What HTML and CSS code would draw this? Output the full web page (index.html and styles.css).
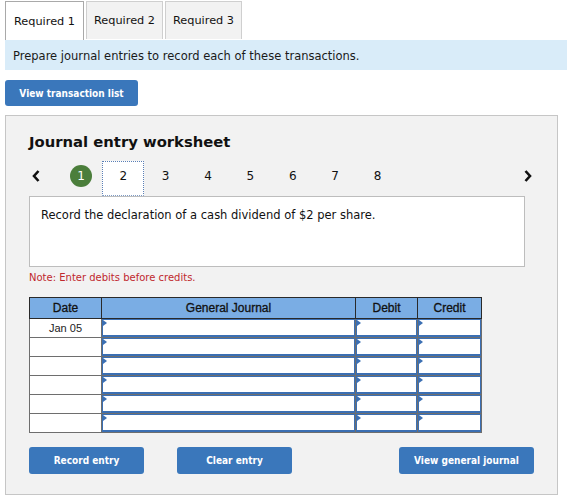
FILE: index.html
```html
<!DOCTYPE html>
<html>
<head>
<meta charset="utf-8">
<link rel="stylesheet" href="styles.css">
</head>
<body>
<div class="tabs">
  <div class="tab active">Required 1</div>
  <div class="tab">Required 2</div>
  <div class="tab">Required 3</div>
</div>
<div class="banner">Prepare journal entries to record each of these transactions.</div>
<button class="btn btn-list">View transaction list</button>
<div class="panel">
  <div class="title">Journal entry worksheet</div>
  <div class="nav">
    <div class="arrow"><svg width="10" height="14" viewBox="0 0 10 14"><path d="M7.5 2 L3 7 L7.5 12" fill="none" stroke="#111" stroke-width="2.6"/></svg></div>
    <div class="step done"><span class="circle">1</span></div>
    <div class="step current">2</div>
    <div class="step">3</div>
    <div class="step">4</div>
    <div class="step">5</div>
    <div class="step">6</div>
    <div class="step">7</div>
    <div class="step">8</div>
    <div class="arrow next"><svg width="10" height="14" viewBox="0 0 10 14"><path d="M2.5 2 L7 7 L2.5 12" fill="none" stroke="#111" stroke-width="2.6"/></svg></div>
  </div>
  <div class="desc">Record the declaration of a cash dividend of $2 per share.</div>
  <div class="note">Note: Enter debits before credits.</div>
  <table class="journal">
    <colgroup><col class="c-date"><col class="c-gj"><col class="c-dr"><col class="c-cr"></colgroup>
    <thead><tr><th>Date</th><th>General Journal</th><th>Debit</th><th>Credit</th></tr></thead>
    <tbody>
      <tr><td class="date">Jan 05</td><td class="in"><div class="box"></div></td><td class="in"><div class="box"></div></td><td class="in"><div class="box"></div></td></tr>
      <tr><td class="date"></td><td class="in"><div class="box"></div></td><td class="in"><div class="box"></div></td><td class="in"><div class="box"></div></td></tr>
      <tr><td class="date"></td><td class="in"><div class="box"></div></td><td class="in"><div class="box"></div></td><td class="in"><div class="box"></div></td></tr>
      <tr><td class="date"></td><td class="in"><div class="box"></div></td><td class="in"><div class="box"></div></td><td class="in"><div class="box"></div></td></tr>
      <tr><td class="date"></td><td class="in"><div class="box"></div></td><td class="in"><div class="box"></div></td><td class="in"><div class="box"></div></td></tr>
      <tr><td class="date"></td><td class="in"><div class="box"></div></td><td class="in"><div class="box"></div></td><td class="in"><div class="box"></div></td></tr>
    </tbody>
  </table>
  <div class="actions">
    <button class="btn btn-record">Record entry</button>
    <button class="btn btn-clear">Clear entry</button>
    <button class="btn btn-view">View general journal</button>
  </div>
</div>
</body>
</html>
```
FILE: styles.css
```css
* { box-sizing: border-box; }
body {
  margin: 0;
  font-family: "DejaVu Sans", Verdana, sans-serif;
  font-size: 11.5px;
  color: #222;
  background: #fff;
}
.tabs {
  display: flex;
  align-items: flex-start;
  padding: 1px 0 0 5px;
  height: 40px;
}
.tab {
  width: 77px;
  height: 38px;
  margin-right: 2px;
  border: 1px solid #cfcfcf;
  border-bottom: none;
  background: #f2f2f2;
  font-size: 11.3px;
  display: flex;
  align-items: center;
  justify-content: center;
  color: #111;
}
.tab.active {
  width: 79px;
  height: 39px;
  background: #fff;
  border-color: #a9a9a9;
}
.banner {
  margin-left: 5px;
  height: 30px;
  line-height: 30px;
  padding: 1px 0 0 8px;
  background: #d9ecf9;
  font-size: 11.5px;
  color: #1a1a1a;
}
.btn {
  font-family: "DejaVu Sans Condensed", "DejaVu Sans", Verdana, sans-serif;
  font-weight: bold;
  font-size: 10px;
  color: #fff;
  background: #3a77bb;
  border: none;
  border-radius: 3px;
  height: 27px;
  padding: 0;
  cursor: pointer;
}
.btn-list {
  display: block;
  margin: 10px 0 0 5px;
  width: 133px;
  height: 26px;
}
.panel {
  margin: 9px 0 0 5px;
  width: 553px;
  height: 380px;
  border: 1px solid #c6c6c6;
  background: #f2f2f2;
  padding: 16px 0 0 23px;
}
.title {
  font-weight: bold;
  font-size: 14.8px;
  line-height: 20px;
  color: #111;
}
.nav {
  display: flex;
  align-items: stretch;
  width: 506px;
  height: 35px;
  margin-top: 9px;
}
.arrow {
  width: 14px;
  display: flex;
  justify-content: center;
  align-items: center;
  padding-bottom: 5px;
}
.arrow:first-child { margin-right: 17px; }
.arrow.next { margin-left: auto; }
.step {
  width: 42.4px;
  height: 35px;
  display: flex;
  align-items: center;
  justify-content: center;
  padding-bottom: 5px;
  font-size: 12px;
  color: #111;
}
.step.current {
  width: 42px;
  background: #fff;
  border: 1px dotted #5a7fb6;
  border-bottom-color: #7f9cc6;
}
.circle {
  width: 22px;
  height: 22px;
  border-radius: 50%;
  background: #4b7e3b;
  color: #fff;
  display: flex;
  align-items: center;
  justify-content: center;
  font-size: 12px;
}
.desc {
  width: 496px;
  height: 71px;
  border: 1px solid #bdbdbd;
  background: #fff;
  padding: 10px 0 0 11px;
  font-size: 11.5px;
  line-height: 16px;
  color: #111;
}
.note {
  margin-top: 4px;
  font-size: 10px;
  line-height: 14px;
  color: #c0282d;
}
.journal {
  margin-top: 12px;
  width: 452px;
  border-collapse: collapse;
  table-layout: fixed;
  font-family: "Liberation Sans", Arial, sans-serif;
  font-size: 11px;
}
.c-date { width: 72px; }
.c-gj { width: 254px; }
.c-dr { width: 62px; }
.c-cr { width: 64px; }
.journal th {
  height: 21px;
  background: #7aade4;
  border: 1px solid #2a2a2a;
  font-weight: normal;
  font-size: 12px;
  color: #111;
  -webkit-text-stroke: 0.3px #111;
  padding: 0;
}
.journal td {
  height: 19px;
  border: 1px solid #6e6e6e;
  padding: 0;
  background: #fff;
}
.journal td.date {
  text-align: center;
  color: #222;
}
.journal td.in { background: #fff; }
.box {
  position: relative;
  height: 18px;
  border: 1px solid #3b6fb3;
  border-bottom-width: 2px;
  background: #fff;
}
.box::before {
  content: "";
  position: absolute;
  left: 0;
  top: 0;
  border-left: 4px solid #3b6fb3;
  border-top: 3px solid transparent;
  border-bottom: 3px solid transparent;
}
.actions {
  display: flex;
  margin-top: 14px;
}
.btn-record { width: 115px; }
.btn-clear { width: 115px; margin-left: 33px; }
.btn-view { width: 135px; margin-left: 107px; }
```
